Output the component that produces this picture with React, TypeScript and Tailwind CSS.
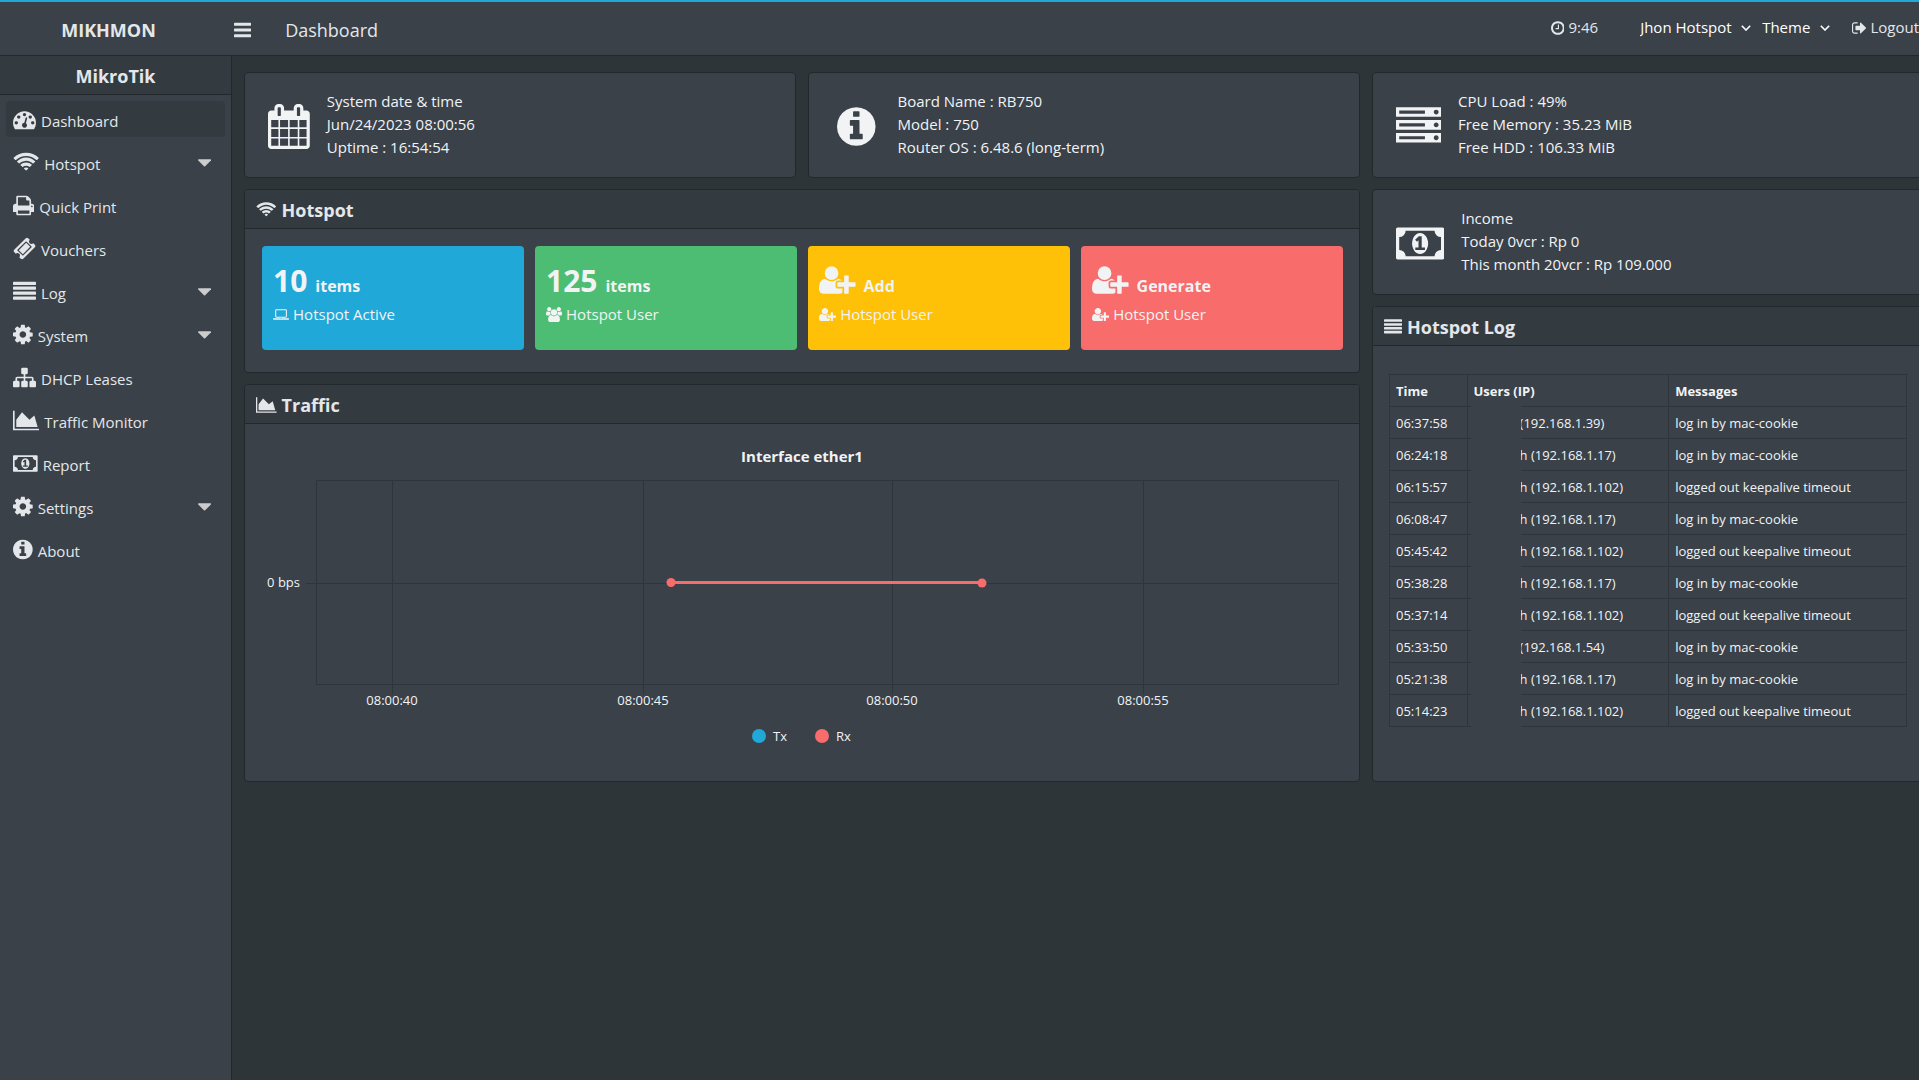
import type { ReactNode } from 'react';

type Glyph = { box: string; d: string };

const icons: Record<string, Glyph> = {
  bars: {
    box: '128 0 1536 1792',
    d: 'M1664 1344v128q0 26-19 45t-45 19H192q-26 0-45-19t-19-45v-128q0-26 19-45t45-19h1408q26 0 45 19t19 45zm0-512v128q0 26-19 45t-45 19H192q-26 0-45-19t-19-45V832q0-26 19-45t45-19h1408q26 0 45 19t19 45zm0-512v128q0 26-19 45t-45 19H192q-26 0-45-19t-19-45V320q0-26 19-45t45-19h1408q26 0 45 19t19 45z',
  },
  dashboard: {
    box: '0 0 1792 1792',
    d: 'M384 1152q0-53-37.5-90.5t-90.5-37.5-90.5 37.5-37.5 90.5 37.5 90.5 90.5 37.5 90.5-37.5 37.5-90.5zm192-448q0-53-37.5-90.5t-90.5-37.5-90.5 37.5-37.5 90.5 37.5 90.5 90.5 37.5 90.5-37.5 37.5-90.5zm428 481l101-382q6-26-7.5-48.5t-38.5-29.5-48 6.5-30 39.5l-101 382q-60 5-107 43.5t-63 98.5q-20 77 20 146t117 89 146-20 89-117q16-60-6-117t-72-91zm660-33q0-53-37.5-90.5t-90.5-37.5-90.5 37.5-37.5 90.5 37.5 90.5 90.5 37.5 90.5-37.5 37.5-90.5zm-640-640q0-53-37.5-90.5t-90.5-37.5-90.5 37.5-37.5 90.5 37.5 90.5 90.5 37.5 90.5-37.5 37.5-90.5zm448 192q0-53-37.5-90.5t-90.5-37.5-90.5 37.5-37.5 90.5 37.5 90.5 90.5 37.5 90.5-37.5 37.5-90.5zm320 448q0 261-141 483-19 29-54 29h-1402q-35 0-54-29-141-221-141-483 0-182 71-348t191-286 286-191 348-71 348 71 286 191 191 286 71 348z',
  },
  wifi: {
    box: '0 0 2048 1792',
    d: 'M1024 1523q-20 0-93-73.5t-73-93.5q0-32 62.5-54t103.5-22 103.5 22 62.5 54q0 20-73 93.5t-93 73.5zm270-271q-2 0-40-25t-101.5-50-128.5-25-128.5 25-101 50-40.5 25q-18 0-93.5-75t-75.5-93q0-13 10-23 78-77 196-121t233-44 233 44 196 121q10 10 10 23 0 18-75.5 93t-93.5 75zm273-272q-11 0-23-8-136-105-252-154.5t-268-49.5q-85 0-170.5 22t-149 53-113.5 62-79 53-31 22q-17 0-92-75t-75-93q0-12 10-22 132-132 320-205t380-73 380 73 320 205q10 10 10 22 0 18-75 93t-92 75zm271-271q-11 0-22-9-179-157-371.5-236.5t-420.5-79.5-420.5 79.5-371.5 236.5q-11 9-22 9-17 0-92.5-75t-75.5-93q0-13 10-23 187-186 445-288t527-102 527 102 445 288q10 10 10 23 0 18-75.5 93t-92.5 75z',
  },
  print: {
    box: '64 0 1664 1792',
    d: 'M448 1536h896v-256h-896v256zm0-640h896v-384h-160q-40 0-68-28t-28-68v-160h-640v640zm1152 64q0-26-19-45t-45-19-45 19-19 45 19 45 45 19 45-19 19-45zm128 0v416q0 13-9.5 22.5t-22.5 9.5h-224v160q0 40-28 68t-68 28h-960q-40 0-68-28t-28-68v-160h-224q-13 0-22.5-9.5t-9.5-22.5v-416q0-79 56.5-135.5t135.5-56.5h64v-544q0-40 28-68t68-28h672q40 0 88 20t76 48l152 152q28 28 48 76t20 88v256h64q79 0 135.5 56.5t56.5 135.5z',
  },
  ticket: {
    box: '0 0 1792 1792',
    d: 'M1024 452l316 316-572 572-316-316zm-211 979l618-618q19-19 19-45t-19-45l-362-362q-18-18-45-18t-45 18l-618 618q-19 19-19 45t19 45l362 362q18 18 45 18t45-18zm889-637l-907 908q-37 37-90.5 37t-90.5-37l-126-126q56-56 56-136t-56-136-136-56-136 56l-125-126q-37-37-37-90.5t37-90.5l907-906q37-37 90.5-37t90.5 37l125 125q-56 56-56 136t56 136 136 56 136-56l126 125q37 37 37 90.5t-37 90.5z',
  },
  list: {
    box: '0 0 1792 1792',
    d: [1344, 960, 576, 192]
      .map((y) => `M1792 ${y}v128q0 26-19 45t-45 19H64q-26 0-45-19t-19-45v-128q0-26 19-45t45-19h1664q26 0 45 19t19 45z`)
      .join(''),
  },
  cog: {
    box: '128 0 1536 1792',
    d: 'M1152 896q0-106-75-181t-181-75-181 75-75 181 75 181 181 75 181-75 75-181zm512-109v222q0 12-8 23t-20 13l-185 28q-19 54-39 91 35 50 107 138 10 12 10 25t-9 23q-27 37-99 108t-94 71q-12 0-26-9l-138-108q-44 23-91 38-16 136-29 186-7 28-36 28h-222q-14 0-24.5-8.5t-11.5-21.5l-28-184q-49-16-90-37l-141 107q-10 9-25 9-14 0-25-11-126-114-165-168-7-10-7-23 0-12 8-23 15-21 51-66.5t54-70.5q-27-50-41-99l-183-27q-13-2-21-12.5t-8-23.5v-222q0-12 8-23t19-13l186-28q14-46 39-92-40-57-107-138-10-12-10-24 0-10 9-23 26-36 98.5-107.5t94.5-71.5q13 0 26 10l138 107q44-23 91-38 16-136 29-186 7-28 36-28h222q14 0 24.5 8.5t11.5 21.5l28 184q49 16 90 37l142-107q9-9 24-9 13 0 25 10 129 119 165 170 7 8 7 22 0 12-8 23-15 21-51 66.5t-54 70.5q26 50 41 98l183 28q13 2 21 12.5t8 23.5z',
  },
  sitemap: {
    box: '0 0 1792 1792',
    d: 'M1792 1248v320q0 40-28 68t-68 28h-320q-40 0-68-28t-28-68v-320q0-40 28-68t68-28h96v-192h-512v192h96q40 0 68 28t28 68v320q0 40-28 68t-68 28h-320q-40 0-68-28t-28-68v-320q0-40 28-68t68-28h96v-192h-512v192h96q40 0 68 28t28 68v320q0 40-28 68t-68 28h-320q-40 0-68-28t-28-68v-320q0-40 28-68t68-28h96v-192q0-52 38-90t90-38h512v-192h-96q-40 0-68-28t-28-68v-320q0-40 28-68t68-28h320q40 0 68 28t28 68v320q0 40-28 68t-68 28h-96v192h512q52 0 90 38t38 90v192h96q40 0 68 28t28 68z',
  },
  chart: {
    box: '0 0 2048 1792',
    d: 'M2048 1536v128H0V128h128v1408h1920zM1664 512l256 896H256V832l448-576 576 576z',
  },
  money: {
    box: '0 0 1920 1792',
    d: 'M768 1152h384v-96h-128V608h-114l-148 137 77 80q42-37 55-57h2v288h-128v96zm512-256q0 70-21 142t-59.5 134-101.5 101-138 39-138-39-101.5-101-59.5-134-21-142 21-142 59.5-134 101.5-101 138-39 138 39 101.5 101 59.5 134 21 142zm512 256V640q-106 0-181-75t-75-181H384q0 106-75 181t-181 75v512q106 0 181 75t75 181h1152q0-106 75-181t181-75zm128-832v1152q0 26-19 45t-45 19H64q-26 0-45-19t-19-45V320q0-26 19-45t45-19h1792q26 0 45 19t19 45z',
  },
  info: {
    box: '128 0 1536 1792',
    d: 'M1152 1376v-160q0-14-9-23t-23-9h-96v-512q0-14-9-23t-23-9h-320q-14 0-23 9t-9 23v160q0 14 9 23t23 9h96v320h-96q-14 0-23 9t-9 23v160q0 14 9 23t23 9h448q14 0 23-9t9-23zm-128-896v-160q0-14-9-23t-23-9h-192q-14 0-23 9t-9 23v160q0 14 9 23t23 9h192q14 0 23-9t9-23zm640 416q0 209-103 385.5t-279.5 279.5-385.5 103-385.5-103-279.5-279.5-103-385.5 103-385.5 279.5-279.5 385.5-103 385.5 103 279.5 279.5 103 385.5z',
  },
  caret: {
    box: '384 0 1024 1792',
    d: 'M1408 704q0 26-19 45l-448 448q-19 19-45 19t-45-19l-448-448q-19-19-19-45t19-45 45-19h896q26 0 45 19t19 45z',
  },
  calendar: {
    box: '64 0 1664 1792',
    d: 'M192 1664h288v-288h-288v288zm352 0h320v-288h-320v288zm-352-352h288v-320h-288v320zm352 0h320v-320h-320v320zm-352-384h288v-288h-288v288zm736 736h320v-288h-320v288zm-384-736h320v-288h-320v288zm768 736h288v-288h-288v288zm-384-352h320v-320h-320v320zm-352-864v-288q0-13-9.5-22.5t-22.5-9.5h-64q-13 0-22.5 9.5t-9.5 22.5v288q0 13 9.5 22.5t22.5 9.5h64q13 0 22.5-9.5t9.5-22.5zm736 864h288v-320h-288v320zm-384-384h320v-288h-320v288zm384 0h288v-288h-288v288zm32-480v-288q0-13-9.5-22.5t-22.5-9.5h-64q-13 0-22.5 9.5t-9.5 22.5v288q0 13 9.5 22.5t22.5 9.5h64q13 0 22.5-9.5t9.5-22.5zm384-64v1280q0 52-38 90t-90 38h-1408q-52 0-90-38t-38-90v-1280q0-52 38-90t90-38h128v-96q0-66 47-113t113-47h64q66 0 113 47t47 113v96h384v-96q0-66 47-113t113-47h64q66 0 113 47t47 113v96h128q52 0 90 38t38 90z',
  },
  server: {
    box: '0 0 1792 1792',
    d: 'M128 1408h1024v-128H128v128zm0-512h1024V768H128v128zm1568 448q0-40-28-68t-68-28-68 28-28 68 28 68 68 28 68-28 28-68zM128 384h1024V256H128v128zm1568 448q0-40-28-68t-68-28-68 28-28 68 28 68 68 28 68-28 28-68zm0-512q0-40-28-68t-68-28-68 28-28 68 28 68 68 28 68-28 28-68zm96 832v384H0v-384h1792zm0-512v384H0V640h1792zm0-512v384H0V128h1792z',
  },
  laptop: {
    box: '0 0 1920 1792',
    d: 'M416 1280q-66 0-113-47t-47-113v-704q0-66 47-113t113-47h1088q66 0 113 47t47 113v704q0 66-47 113t-113 47h-1088zm-32-864v704q0 13 9.5 22.5t22.5 9.5h1088q13 0 22.5-9.5t9.5-22.5v-704q0-13-9.5-22.5t-22.5-9.5h-1088q-13 0-22.5 9.5t-9.5 22.5zm1376 928h160v96q0 40-47 68t-113 28h-1600q-66 0-113-28t-47-68v-96h1760zm-720 96q16 0 16-16t-16-16h-160q-16 0-16 16t16 16h160z',
  },
  users: {
    box: '64 0 1920 1792',
    d: 'M657 896q-162 5-265 128h-134q-82 0-138-40.5t-56-118.5q0-353 124-353 6 0 43.5 21t97.5 42.5 119 21.5q67 0 133-23-5 37-5 66 0 139 81 256zm1071 637q0 120-73 189.5t-194 69.5h-874q-121 0-194-69.5t-73-189.5q0-53 3.5-103.5t14-109 26.5-108.5 43-97.5 62-81 85.5-53.5 111.5-20q10 0 43 21.5t73 48 107 48 135 21.5 135-21.5 107-48 73-48 43-21.5q61 0 111.5 20t85.5 53.5 62 81 43 97.5 26.5 108.5 14 109 3.5 103.5zm-1024-1277q0 106-75 181t-181 75-181-75-75-181 75-181 181-75 181 75 75 181zm704 384q0 159-112.5 271.5t-271.5 112.5-271.5-112.5-112.5-271.5 112.5-271.5 271.5-112.5 271.5 112.5 112.5 271.5zm576 225q0 78-56 118.5t-138 40.5h-134q-103-123-265-128 81-117 81-256 0-29-5-66 66 23 133 23 59 0 119-21.5t97.5-42.5 43.5-21q124 0 124 353zm-128-609q0 106-75 181t-181 75-181-75-75-181 75-181 181-75 181 75 75 181z',
  },
  userPlus: {
    box: '0 0 2048 1792',
    d: 'M704 896q-159 0-271.5-112.5t-112.5-271.5 112.5-271.5 271.5-112.5 271.5 112.5 112.5 271.5-112.5 271.5-271.5 112.5zm960 128h352q13 0 22.5 9.5t9.5 22.5v192q0 13-9.5 22.5t-22.5 9.5h-352v352q0 13-9.5 22.5t-22.5 9.5h-192q-13 0-22.5-9.5t-9.5-22.5v-352h-352q-13 0-22.5-9.5t-9.5-22.5v-192q0-13 9.5-22.5t22.5-9.5h352v-352q0-13 9.5-22.5t22.5-9.5h192q13 0 22.5 9.5t9.5 22.5v352zm-736 224q0 52 38 90t90 38h256v238q-68 50-171 50h-874q-121 0-194-69t-73-190q0-53 3.5-103.5t14-109 26.5-108.5 43-97.5 62-81 85.5-53.5 111.5-20q19 0 39 17 79 61 154.5 91.5t164.5 30.5 164.5-30.5 154.5-91.5q20-17 39-17 132 0 217 96h-223q-52 0-90 38t-38 90v192z',
  },
  clock: {
    box: '128 0 1536 1792',
    d: 'M1024 544v448q0 14-9 23t-23 9h-320q-14 0-23-9t-9-23v-64q0-14 9-23t23-9h224v-352q0-14 9-23t23-9h64q14 0 23 9t9 23zm416 352q0-148-73-273t-198-198-273-73-273 73-198 198-73 273 73 273 198 198 273 73 273-73 198-198 73-273zm224 0q0 209-103 385.5t-279.5 279.5-385.5 103-385.5-103-279.5-279.5-103-385.5 103-385.5 279.5-279.5 385.5-103 385.5 103 279.5 279.5 103 385.5z',
  },
  signOut: {
    box: '64 0 1600 1792',
    d: 'M704 1440q0 4 1 20t.5 26.5-3 23.5-10 19.5-20.5 6.5h-320q-119 0-203.5-84.5t-84.5-203.5v-704q0-119 84.5-203.5t203.5-84.5h320q13 0 22.5 9.5t9.5 22.5q0 4 1 20t.5 26.5-3 23.5-10 19.5-20.5 6.5h-320q-66 0-113 47t-47 113v704q0 66 47 113t113 47h312l11.5 1 11.5 3 8 5.5 7 9 2 13.5zm928-544q0 26-19 45l-544 544q-19 19-45 19t-45-19-19-45v-288h-448q-26 0-45-19t-19-45v-384q0-26 19-45t45-19h448v-288q0-26 19-45t45-19 45 19l544 544q19 19 19 45z',
  },
};

function Icon({ name, className }: { name: string; className: string }) {
  const { box, d } = icons[name];
  return (
    <svg viewBox={box} fill="currentColor" fillRule="evenodd" aria-hidden="true" className={`w-auto shrink-0 ${className}`}>
      <path d={d} />
    </svg>
  );
}

const menu = [
  { icon: 'dashboard', label: 'Dashboard', active: true },
  { icon: 'wifi', label: 'Hotspot', expandable: true },
  { icon: 'print', label: 'Quick Print' },
  { icon: 'ticket', label: 'Vouchers' },
  { icon: 'list', label: 'Log', expandable: true },
  { icon: 'cog', label: 'System', expandable: true },
  { icon: 'sitemap', label: 'DHCP Leases' },
  { icon: 'chart', label: 'Traffic Monitor' },
  { icon: 'money', label: 'Report' },
  { icon: 'cog', label: 'Settings', expandable: true },
  { icon: 'info', label: 'About' },
];

const logs = [
  ['06:37:58', '(192.168.1.39)', 'log in by mac-cookie'],
  ['06:24:18', 'h (192.168.1.17)', 'log in by mac-cookie'],
  ['06:15:57', 'h (192.168.1.102)', 'logged out keepalive timeout'],
  ['06:08:47', 'h (192.168.1.17)', 'log in by mac-cookie'],
  ['05:45:42', 'h (192.168.1.102)', 'logged out keepalive timeout'],
  ['05:38:28', 'h (192.168.1.17)', 'log in by mac-cookie'],
  ['05:37:14', 'h (192.168.1.102)', 'logged out keepalive timeout'],
  ['05:33:50', '(192.168.1.54)', 'log in by mac-cookie'],
  ['05:21:38', 'h (192.168.1.17)', 'log in by mac-cookie'],
  ['05:14:23', 'h (192.168.1.102)', 'logged out keepalive timeout'],
];

function HeaderSelect({ label, value }: { label: string; value: string }) {
  return (
    <div className="relative flex items-center text-white">
      <select aria-label={label} className="appearance-none bg-transparent pr-[30px] outline-none">
        <option>{value}</option>
      </select>
      <svg viewBox="0 0 10 6" className="pointer-events-none absolute right-[11px] h-[6px] w-[10px]" fill="none" stroke="currentColor" strokeWidth="1.6">
        <path d="M0.8 0.8 5 5 9.2 0.8" />
      </svg>
    </div>
  );
}

function Header() {
  return (
    <header className="flex h-14 items-center border-t-2 border-b border-t-[#20a8d8] border-b-[#23282c] bg-[#3a4149]">
      <a href="#home" className="w-[217px] pt-0.5 text-center text-lg font-bold">
        MIKHMON
      </a>
      <button type="button" aria-label="Toggle sidebar" className="ml-[17px] pt-0.5">
        <Icon name="bars" className="h-5" />
      </button>
      <h1 className="ml-[34px] pt-0.5 text-lg">Dashboard</h1>
      <div className="ml-auto flex items-center pb-0.5">
        <span className="mr-[42px] flex items-center gap-1">
          <Icon name="clock" className="h-4" />
          9:46
        </span>
        <HeaderSelect label="Router" value="Jhon Hotspot" />
        <HeaderSelect label="Theme" value="Theme" />
        <a href="#logout" className="ml-[11px] flex items-center gap-1">
          <Icon name="signOut" className="h-4" />
          Logout
        </a>
      </div>
    </header>
  );
}

function Sidebar() {
  return (
    <aside className="w-[232px] shrink-0 border-r border-[#23282c] bg-[#3a4149]">
      <div className="border-b border-[#23282c] bg-[#343b40] pt-1.5 pb-1 text-center text-lg font-bold">MikroTik</div>
      <nav className="flex flex-col gap-[7px] px-1.5 py-1.5">
        {menu.map((item) => (
          <a
            key={item.label}
            href={`#${item.label}`}
            className={`flex h-9 items-center gap-[5px] rounded pr-[14px] pl-[7px] ${item.active ? 'bg-[#343b40]' : ''}`}
          >
            <Icon name={item.icon} className="h-[23px]" />
            <span className="pt-1">{item.label}</span>
            {item.expandable && <Icon name="caret" className="ml-auto h-[23px] text-[#cccccc]" />}
          </a>
        ))}
      </nav>
    </aside>
  );
}

function InfoCard({ icon, wide, lines }: { icon: string; wide?: boolean; lines: string[] }) {
  return (
    <section className="flex items-center gap-[17px] rounded border border-[#23282c] bg-[#3a4149] px-[23px] pt-[17px] pb-[18px] text-[#f1f3f5]">
      <Icon name={icon} className={wide ? 'mx-[5px] mt-[3px] h-[45px]' : 'mt-[3px] h-[45px]'} />
      <div className="leading-[23px]">
        {lines.map((line) => (
          <p key={line}>{line}</p>
        ))}
      </div>
    </section>
  );
}

function Panel({ icon, title, grow, children }: { icon: string; title: string; grow?: boolean; children: ReactNode }) {
  return (
    <section className={`overflow-hidden rounded border border-[#23282c] bg-[#3a4149] ${grow ? 'grow' : ''}`}>
      <h2 className="flex h-[39px] items-center gap-[5px] border-b border-[#23282c] bg-[#343b40] px-[11px] text-lg font-bold">
        <Icon name={icon} className="mt-0.5 h-[18px]" />
        <span className="pt-0.5">{title}</span>
      </h2>
      {children}
    </section>
  );
}

function Tile({ color, lead, title, icon, label }: { color: string; lead: ReactNode; title: string; icon: string; label: string }) {
  return (
    <a href={`#${title}`} className={`block rounded px-[11px] pt-4 pb-[25px] text-[#f1f3f5] ${color}`}>
      <span className="flex h-[38px] items-baseline gap-2 font-bold">
        <span className="text-[30px] leading-[38px]">{lead}</span>
        <span className="text-base">{title}</span>
      </span>
      <span className="mt-[3px] flex items-center gap-1 leading-[22px]">
        <Icon name={icon} className="h-[15px]" />
        {label}
      </span>
    </a>
  );
}

function TrafficChart() {
  const ticks = [
    { x: 147, label: '08:00:40' },
    { x: 398, label: '08:00:45' },
    { x: 647, label: '08:00:50' },
    { x: 898, label: '08:00:55' },
  ];
  return (
    <svg viewBox="0 0 1114 357" className="block w-full" role="img" aria-label="Interface ether1" fill="#f1f3f5" fontSize="13">
      <text x="557" y="38" textAnchor="middle" fontSize="15" fontWeight="700">
        Interface ether1
      </text>
      <g fill="none" stroke="#2f353a" strokeWidth="1">
        <path d="M71.5 56.5H1093.5V260.5H71.5Z" />
        <path d="M61 159.5H1093" />
        {ticks.map((tick) => (
          <path key={tick.x} d={`M${tick.x + 0.5} 56V270`} />
        ))}
      </g>
      <text x="55" y="163" textAnchor="end">
        0 bps
      </text>
      {ticks.map((tick) => (
        <text key={tick.x} x={tick.x} y="281" textAnchor="middle">
          {tick.label}
        </text>
      ))}
      <path d="M426 158.5H737" stroke="#f86c6b" strokeWidth="3" />
      <circle cx="426" cy="158.5" r="4.5" fill="#f86c6b" />
      <circle cx="737" cy="159" r="4.5" fill="#f86c6b" />
      <circle cx="514" cy="312" r="7" fill="#20a8d8" />
      <text x="528" y="317">
        Tx
      </text>
      <circle cx="577" cy="312" r="7" fill="#f86c6b" />
      <text x="591" y="317">
        Rx
      </text>
    </svg>
  );
}

function LogTable() {
  return (
    <table className="w-full table-fixed border-collapse text-left text-[13px] leading-[18px] text-[#f1f3f5] [&_td]:border [&_td]:border-[#2f353a] [&_td]:px-1.5 [&_td]:pt-[7px] [&_td]:pb-1.5 [&_th]:border [&_th]:border-[#2f353a] [&_th]:px-1.5 [&_th]:pt-[7px] [&_th]:pb-1.5">
      <thead>
        <tr>
          <th className="w-[15%]">Time</th>
          <th className="w-[39%]">Users (IP)</th>
          <th>Messages</th>
        </tr>
      </thead>
      <tbody>
        {logs.map(([time, user, message]) => (
          <tr key={time}>
            <td>{time}</td>
            <td className="relative">
              {/* covers the user name and the row lines behind it */}
              <span className="absolute -inset-y-px left-[3px] w-[50px] bg-[#3a4149]" />
              <span className="pl-[46px]">{user}</span>
            </td>
            <td>{message}</td>
          </tr>
        ))}
      </tbody>
    </table>
  );
}

export default function App() {
  const addUser = <Icon name="userPlus" className="inline-block h-8 align-[-4px]" />;

  return (
    <div className="flex min-h-screen flex-col overflow-hidden bg-[#2e3538] font-['Open_Sans','Noto_Sans',sans-serif] text-[15px] text-[#e4e7ea]">
      <Header />
      <div className="flex grow">
        <Sidebar />
        <main className="-mr-[5px] grid grow grid-cols-3 content-start gap-x-3 py-4 pl-3">
          <div className="col-span-2 flex flex-col gap-[11px]">
            <div className="grid grid-cols-2 gap-3">
              <InfoCard icon="calendar" lines={['System date & time', 'Jun/24/2023 08:00:56', 'Uptime : 16:54:54']} />
              <InfoCard icon="info" wide lines={['Board Name : RB750', 'Model : 750', 'Router OS : 6.48.6 (long-term)']} />
            </div>
            <Panel icon="wifi" title="Hotspot">
              <div className="grid grid-cols-4 gap-[11px] pt-[17px] pr-4 pb-[22px] pl-[17px]">
                <Tile color="bg-[#20a8d8]" lead="10" title="items" icon="laptop" label="Hotspot Active" />
                <Tile color="bg-[#4dbd74]" lead="125" title="items" icon="users" label="Hotspot User" />
                <Tile color="bg-[#ffc107]" lead={addUser} title="Add" icon="userPlus" label="Hotspot User" />
                <Tile color="bg-[#f86c6b]" lead={addUser} title="Generate" icon="userPlus" label="Hotspot User" />
              </div>
            </Panel>
            <Panel icon="chart" title="Traffic">
              <TrafficChart />
            </Panel>
          </div>
          <div className="flex flex-col gap-[11px]">
            <InfoCard icon="server" lines={['CPU Load : 49%', 'Free Memory : 35.23 MiB', 'Free HDD : 106.33 MiB']} />
            <InfoCard icon="money" lines={['Income', 'Today 0vcr : Rp 0', 'This month 20vcr : Rp 109.000']} />
            <Panel icon="list" title="Hotspot Log" grow>
              <div className="px-4 pt-7">
                <LogTable />
              </div>
            </Panel>
          </div>
        </main>
      </div>
    </div>
  );
}
